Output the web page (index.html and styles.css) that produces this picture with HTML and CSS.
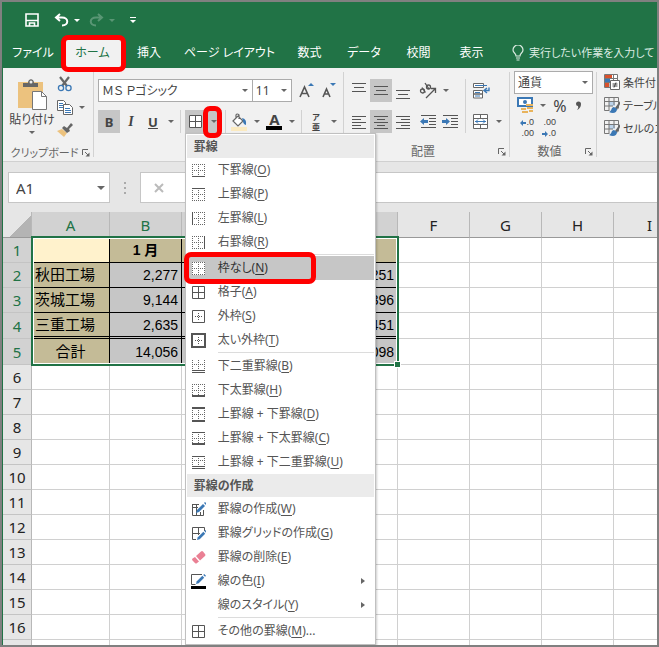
FILE: index.html
```html
<!DOCTYPE html>
<html lang="ja">
<head>
<meta charset="utf-8">
<title>Excel</title>
<link rel="stylesheet" href="styles.css">
</head>
<body>
<svg class="defs" aria-hidden="true">
  <symbol id="dots" viewBox="0 0 15 15"><path d="M1 1.5h13M1 7.5h13M1 13.5h13M1.5 1v13M7.5 1v13M13.5 1v13" fill="none" stroke="#666" stroke-dasharray="1 1"/></symbol>
  <symbol id="cross" viewBox="0 0 15 15"><path d="M4 7.5h8M7.5 4v8" fill="none" stroke="#555" stroke-dasharray="1 1"/></symbol>
  <symbol id="grid" viewBox="0 0 15 15"><path d="M1.5 1.5h12v12h-12zM1 7.5h13M7.5 1v13" fill="none" stroke="#555"/></symbol>
  <symbol id="pencil" viewBox="0 0 12 12"><path d="M1 11l1-3 6-6 2 2-6 6z" fill="#3b78b5"/><path d="M9 1l1-1 2 2-1 1z" fill="#3b78b5"/></symbol>
  <symbol id="launch" viewBox="0 0 8 8"><path d="M.5 6V.5H6M3 3l3.5 3.5" fill="none" stroke="#666"/><path d="M7.500 3.500v4h-4z" fill="#666"/></symbol>
  <symbol id="tablebrush" viewBox="0 0 17 17"><path d="M5 5h6v4H5z" fill="#bcd3ea"/><path d="M.5.500h14v11M.5.500v13h5M1 4.500h13M1 9h8M5 1v12M10 1v7" fill="none" stroke="#777"/><path d="M16 4l-5 7 2 2 3-6z" fill="#666"/><path d="M10 10c-3 0-2 4-5 5 4 2 8 1 8-3z" fill="#3b78b5"/></symbol>
</svg>
<div class="app">
  <header class="titlebar">
    <div class="quick">
      <button aria-label="上書き保存"><svg width="14" height="14" viewBox="0 0 14 14"><path d="M1 1h12v12H1zM1 7.500h12M4.500 13v-3h5v3" fill="none" stroke="#fff" stroke-width="1.600"/></svg></button>
      <button class="undo" aria-label="元に戻す"><svg width="15" height="14" viewBox="0 0 15 14"><path d="M6 1L2 4.500 6 8M2 4.500h6c7 0 7 8 0 8" fill="none" stroke="#fff" stroke-width="2"/></svg><i class="arrow"></i></button>
      <button class="undo off" aria-label="やり直し"><svg width="15" height="14" viewBox="0 0 15 14"><path d="M9 1l4 3.500L9 8M13 4.500H7c-7 0-7 8 0 8" fill="none" stroke="#fff" stroke-width="2"/></svg><i class="arrow"></i></button>
      <button class="custom" aria-label="カスタマイズ"><i class="arrow"></i></button>
    </div>
    <nav class="tabs">
      <a href="#">ファイル</a><a href="#" class="active"><span>ホーム</span></a><a href="#">挿入</a><a href="#">ページ レイアウト</a><a href="#">数式</a><a href="#">データ</a><a href="#">校閲</a><a href="#">表示</a>
      <a href="#" class="tell"><svg width="12" height="16" viewBox="0 0 12 16"><path d="M4 11C4 8 1 8 1 5a5 5 0 0 1 10 0c0 3-3 3-3 6zM4 13h4M4.500 15h3" fill="none" stroke="#dcebe2" stroke-width="1.200"/></svg>実行したい作業を入力して</a>
    </nav>
  </header>

  <section class="ribbon">
    <div class="group clip">
      <div class="clip-body">
        <button class="paste"><svg width="29" height="31" viewBox="0 0 29 31"><path d="M0 3h25v26H0z" fill="#ecc27e"/><path d="M5 8V4h5c0-5 6-5 6 0h4v4z" fill="#666"/><circle cx="13" cy="3" r="1.500" fill="#eee"/><path d="M14.500 12.500h9l5 5v13h-14z" fill="#fff" stroke="#777"/><path d="M23.500 12.500v5h5" fill="none" stroke="#777"/></svg><span>貼り付け</span><i class="arrow"></i></button>
        <div class="clip-side">
          <button aria-label="切り取り"><svg width="16" height="16" viewBox="0 0 16 16"><path d="M3 1l7 9M12 1L5 10" stroke="#666" stroke-width="2.200"/><circle cx="4" cy="12" r="2.600" fill="none" stroke="#3b78b5" stroke-width="1.300"/><circle cx="11.500" cy="12" r="2.600" fill="none" stroke="#3b78b5" stroke-width="1.300"/></svg></button>
          <button aria-label="コピー"><svg width="16" height="15" viewBox="0 0 16 15"><path d="M.5.500h6l2 2v8h-8z" fill="#fff" stroke="#666"/><path d="M2 3.500h4M2 5.500h4M2 7.500h4" stroke="#3b78b5"/><path d="M6.500 4.500h6l3 3v7h-9z" fill="#fff" stroke="#666"/><path d="M8 8.500h5M8 10.500h6M8 12.500h6" stroke="#3b78b5"/></svg><i class="arrow"></i></button>
          <button aria-label="書式のコピー"><svg width="16" height="14" viewBox="0 0 16 14"><path d="M0 8l5-2 5 4-3 4z" fill="#ecc27e"/><path d="M5 5l2-2 3 2 4-5 2 2-4 4 1 2-3 2z" fill="#666"/></svg></button>
        </div>
      </div>
      <footer><span>クリップボード</span><svg class="launch" width="8" height="8"><use href="#launch"/></svg></footer>
    </div>

    <div class="group font">
      <div class="row">
        <label class="combo face"><select aria-label="フォント"><option>ＭＳ Ｐゴシック</option></select></label>
        <label class="combo size"><select aria-label="フォント サイズ"><option>11</option></select></label>
        <button class="tool grow" aria-label="拡大"><svg width="16" height="18" viewBox="0 0 16 18"><path d="M1 15L5.500 5 10 15M2.500 11.500h6" fill="none" stroke="#555" stroke-width="1.600"/><path d="M9 4l3-3 3 3z" fill="#3b78b5"/></svg></button>
        <button class="tool" aria-label="縮小"><svg width="16" height="18" viewBox="0 0 16 18"><path d="M2 15l3.500-8L9 15M3.500 12h4" fill="none" stroke="#555" stroke-width="1.600"/><path d="M9 1h6l-3 3z" fill="#3b78b5"/></svg></button>
      </div>
      <div class="row">
        <button class="tool on bold">B</button><button class="tool italic">I</button><button class="tool under">U</button><button class="drop" aria-label="下線の種類"><i class="arrow"></i></button>
        <i class="bar"></i>
        <div class="borders">
          <button class="tool on" aria-label="罫線"><svg width="15" height="15" viewBox="0 0 15 15"><path d="M1 1h13v13H1z" fill="#fff"/><use href="#grid"/></svg></button><button class="drop on marked" aria-label="罫線メニュー"><i class="arrow"></i></button>
          <div class="menu" role="menu">
            <h2>罫線</h2>
            <button role="menuitem"><svg viewBox="0 0 15 15"><use href="#dots"/><path d="M1 13.500h13"/></svg><span>下罫線(<u>O</u>)</span></button>
            <button role="menuitem"><svg viewBox="0 0 15 15"><use href="#dots"/><path d="M1 1.500h13"/></svg><span>上罫線(<u>P</u>)</span></button>
            <button role="menuitem"><svg viewBox="0 0 15 15"><use href="#dots"/><path d="M1.500 1v13"/></svg><span>左罫線(<u>L</u>)</span></button>
            <button role="menuitem"><svg viewBox="0 0 15 15"><use href="#dots"/><path d="M13.500 1v13"/></svg><span>右罫線(<u>R</u>)</span></button>
            <hr>
            <button role="menuitem" class="current"><svg viewBox="0 0 15 15"><path class="paper" d="M1 1h13v13H1z"/><use href="#dots"/></svg><span>枠なし(<u>N</u>)</span></button>
            <button role="menuitem"><svg viewBox="0 0 15 15"><use href="#grid"/></svg><span>格子(<u>A</u>)</span></button>
            <button role="menuitem"><svg viewBox="0 0 15 15"><path d="M1.500 1.500h12v12h-12z"/><use href="#cross"/></svg><span>外枠(<u>S</u>)</span></button>
            <button role="menuitem"><svg viewBox="0 0 15 15"><path class="heavy" d="M1 1h13v13H1z"/><use href="#cross"/></svg><span>太い外枠(<u>T</u>)</span></button>
            <hr>
            <button role="menuitem"><svg viewBox="0 0 15 15"><use href="#dots" y="-2"/><path d="M1 11.500h13M1 13.500h13"/></svg><span>下二重罫線(<u>B</u>)</span></button>
            <button role="menuitem"><svg viewBox="0 0 15 15"><use href="#dots"/><path class="heavy" d="M1 13h13"/></svg><span>下太罫線(<u>H</u>)</span></button>
            <button role="menuitem"><svg viewBox="0 0 15 15"><use href="#dots"/><path class="heavy" d="M1 1h13M1 14h13"/></svg><span>上罫線 + 下罫線(<u>D</u>)</span></button>
            <button role="menuitem"><svg viewBox="0 0 15 15"><use href="#dots"/><path d="M1 1.500h13"/><path class="heavy" d="M1 13h13"/></svg><span>上罫線 + 下太罫線(<u>C</u>)</span></button>
            <button role="menuitem"><svg viewBox="0 0 15 15"><use href="#dots" y="-2"/><path d="M1 1.500h13M1 11.500h13M1 13.500h13"/></svg><span>上罫線 + 下二重罫線(<u>U</u>)</span></button>
            <h2>罫線の作成</h2>
            <button role="menuitem"><svg viewBox="0 0 15 15"><path d="M8 2.500H1.500v11h11V8M1 5.500h6M5.500 3v11M9.500 10v4M1 2.500h7"/><use href="#pencil" x="4" y="0" width="12" height="12"/></svg><span>罫線の作成(<u>W</u>)</span></button>
            <button role="menuitem"><svg viewBox="0 0 15 15"><path d="M5 13.500H1.500v-12h12V5M1 7.500h8M7.500 1v8"/><use href="#pencil" x="5" y="4" width="11" height="11"/></svg><span>罫線グリッドの作成(<u>G</u>)</span></button>
            <button role="menuitem"><svg viewBox="0 0 15 15"><path class="eraser" d="M5 6l5-4.500q1-1 2 0L14 4q1 1 0 2L9 10.500zM4 7l4 4.500-2 1.500q-1 1-2 0L1.500 10.500q-1-1 0-2z"/></svg><span>罫線の削除(<u>E</u>)</span></button>
            <button role="menuitem"><svg viewBox="0 0 15 15"><path d="M11 .500H.500v10h4"/><use href="#pencil" x="4" y="0" width="11" height="11"/><path class="ink" d="M0 12h15v3H0z"/></svg><span>線の色(<u>I</u>)</span><i class="more"></i></button>
            <button role="menuitem"><svg viewBox="0 0 15 15"></svg><span>線のスタイル(<u>Y</u>)</span><i class="more"></i></button>
            <hr>
            <button role="menuitem"><svg viewBox="0 0 15 15"><use href="#grid"/></svg><span>その他の罫線(<u>M</u>)...</span></button>
          </div>
        </div>
        <i class="bar tight"></i>
        <button class="tool" aria-label="塗りつぶし"><svg width="18" height="18" viewBox="0 0 18 18"><path d="M3 8l5-5 5 5-5 5zM6 5V2q1-2 3 0v4" fill="#fff" stroke="#666" stroke-width="1.200"/><path d="M12 5q5 1 4 7-3-1-3-4z" fill="#3b78b5"/><path d="M1 14h16v4H1z" fill="#fbeac0"/></svg></button><button class="drop" aria-label="塗りつぶしの色"><i class="arrow"></i></button>
        <button class="tool ink-tool" aria-label="フォントの色"><b>A</b></button><button class="drop" aria-label="文字の色"><i class="arrow"></i></button>
        <i class="bar tight"></i>
        <button class="tool ruby"><small>ア</small><small>亜</small></button><button class="drop" aria-label="ふりがな"><i class="arrow"></i></button>
      </div>
      <footer></footer>
    </div>

    <div class="group align">
      <div class="align-body">
        <div>
          <div class="row">
            <button class="tool" aria-label="上揃え"><svg width="14" height="16"><path d="M0 1.500h14M2 5.500h10M0 9.500h14" stroke="#555" transform="translate(0 -1)"/></svg></button>
            <button class="tool on" aria-label="上下中央"><svg width="14" height="16"><path d="M0 4.500h14M2 8.500h10M0 12.500h14" stroke="#555" transform="translate(0 -1)"/></svg></button>
            <button class="tool" aria-label="下揃え"><svg width="14" height="16"><path d="M0 7.500h14M2 11.500h10M0 15.500h14" stroke="#555"/></svg></button>
            <button class="tool wide" aria-label="方向"><svg width="18" height="17" viewBox="0 0 18 17"><g fill="none" stroke="#555" stroke-width="1.300"><circle cx="3.500" cy="9" r="2"/><path d="M3 5.500l3.500 5M6 1l4 6"/><circle cx="9.500" cy="5" r="2"/><path d="M7 16l9-9M12 6.500h4.500V11"/></g></svg></button><button class="drop" aria-label="方向の種類"><i class="arrow"></i></button>
          </div>
          <div class="row">
            <button class="tool" aria-label="左揃え"><svg width="14" height="14"><path d="M0 1.500h14M0 4.500h9M0 7.500h14M0 10.500h9M0 13.500h14" stroke="#555"/></svg></button>
            <button class="tool on" aria-label="中央揃え"><svg width="14" height="14"><path d="M0 1.500h14M3 4.500h8M0 7.500h14M3 10.500h8M0 13.500h14" stroke="#555"/></svg></button>
            <button class="tool" aria-label="右揃え"><svg width="14" height="14"><path d="M0 1.500h14M5 4.500h9M0 7.500h14M5 10.500h9M0 13.500h14" stroke="#555"/></svg></button>
            <button class="tool wide" aria-label="インデントを減らす"><svg width="17" height="14"><path d="M1 .500h15M9 3.500h7M9 6.500h7M9 9.500h7M1 12.500h15" stroke="#555"/><path d="M0 6.500L4 3v2h4v3H4v2z" fill="#3b78b5"/></svg></button><button class="tool" aria-label="インデントを増やす"><svg width="17" height="14"><path d="M1 .500h15M9 3.500h7M9 6.500h7M9 9.500h7M1 12.500h15" stroke="#555"/><path d="M8 6.500L4 3v2H0v3h4v2z" fill="#3b78b5"/></svg></button>
          </div>
        </div>
        <div class="merge">
          <button class="tool" aria-label="折り返し"><svg width="17" height="16" viewBox="0 0 17 16"><path d="M.5.500h10v4H.500zM.5 7.500h9v3.500h-9zM.5 11h9v4h-9z" fill="#fff" stroke="#666"/><path d="M2 2.500h12M2 9.500h5M2 13h5" stroke="#3b78b5"/><path d="M16 4.500v3h-4M14 5l-3 2.500 3 2.500" fill="none" stroke="#3b78b5" stroke-width="1.400"/></svg></button>
          <div class="row"><button class="tool" aria-label="セルを結合"><svg width="16" height="15"><path d="M.5.500h14v14H.500zM1 4.500h14M1 10.500h14M7.500 1v3M7.500 11v3" fill="#fff" stroke="#666"/><path d="M2 7.500h11M5 5.500l-2 2 2 2M10 5.500l2 2-2 2" fill="none" stroke="#3b78b5"/></svg></button><button class="drop" aria-label="結合の種類"><i class="arrow"></i></button></div>
        </div>
      </div>
      <footer><span>配置</span><svg class="launch" width="8" height="8"><use href="#launch"/></svg></footer>
    </div>

    <div class="group number">
      <label class="combo"><select aria-label="表示形式"><option>通貨</option></select></label>
      <div class="row">
        <button class="tool" aria-label="通貨表示形式"><svg width="17" height="17" viewBox="0 0 17 17"><path d="M1 1h14v8H1z" fill="#fff" stroke="#3b78b5" stroke-width="2"/><circle cx="8" cy="5" r="2" fill="#3b78b5"/><path d="M9 7h7v2H9zM10 10h6v2h-6zM4 11h5v2H4zM5 14h6v2H5zM12 13h4v2h-4z" fill="#e8b35c"/></svg></button><button class="drop" aria-label="通貨の種類"><i class="arrow"></i></button><button class="tool percent">%</button><button class="tool comma" aria-label="桁区切り"><svg width="7" height="9"><path d="M1 3a2.500 2.500 0 1 1 5 0Q6 7 2 9q2-2 1-4Q1 5 1 3z" fill="#555"/></svg></button>
      </div>
      <div class="row decimals">
        <button><span><svg width="6" height="6"><path d="M0 3l3-3v2h3v2H3v2z" fill="#3b78b5"/></svg>.0</span><span>.00</span></button>
        <button><span>.00</span><span><svg width="6" height="6"><path d="M6 3L3 0v2H0v2h3v2z" fill="#3b78b5"/></svg>.0</span></button>
      </div>
      <footer><span>数値</span><svg class="launch" width="8" height="8"><use href="#launch"/></svg></footer>
    </div>

    <div class="group styles">
      <button><svg width="17" height="17" viewBox="0 0 17 17"><path d="M.5.500h13v13H.500zM1 4.500h13M1 8.500h13M5 1v12M9.500 1v12" fill="#fff" stroke="#777"/><path d="M1 1h7v3H1z" fill="#d9512c"/><path d="M1 5h5v3H1z" fill="#3b78b5"/><path d="M1 9h4v4H1z" fill="#d9512c"/><path d="M6.500 6.500h9v9h-9z" fill="#fff" stroke="#666"/><path d="M8.500 10h5M8.500 12h5M12 8.500l-2 5" stroke="#444"/></svg>条件付</button>
      <button><svg width="17" height="17"><use href="#tablebrush"/></svg>テーブル</button>
      <button><svg width="17" height="17"><use href="#tablebrush"/></svg>セルのス</button>
    </div>
  </section>

  <div class="formula">
    <label class="combo name"><input value="A1" aria-label="名前ボックス"></label>
    <i class="grip"></i>
    <label class="fx"><svg width="12" height="12"><path d="M2 2l8 8M10 2l-8 8" stroke="#bbb" stroke-width="2"/></svg><input aria-label="数式バー"></label>
  </div>

  <main class="sheet">
    <table>
      <colgroup><col class="c-head"><col class="c-a"><col span="8" class="c-std"></colgroup>
      <thead><tr><th class="corner"></th><th class="sel">A</th><th class="sel">B</th><th class="sel"></th><th class="sel"></th><th class="sel"></th><th>F</th><th>G</th><th>H</th><th>I</th></tr></thead>
      <tbody>
        <tr class="data top"><th>1</th><td class="blank"></td><td>1 月</td><td></td><td></td><td>合計</td><td></td><td></td><td></td><td></td></tr>
        <tr class="data"><th>2</th><td>秋田工場</td><td>2,277</td><td></td><td></td><td>251</td><td></td><td></td><td></td><td></td></tr>
        <tr class="data"><th>3</th><td>茨城工場</td><td>9,144</td><td></td><td></td><td>396</td><td></td><td></td><td></td><td></td></tr>
        <tr class="data double"><th>4</th><td>三重工場</td><td>2,635</td><td></td><td></td><td>451</td><td></td><td></td><td></td><td></td></tr>
        <tr class="data total"><th>5</th><td>合計</td><td>14,056</td><td></td><td></td><td>098</td><td></td><td></td><td></td><td></td></tr>
        <tr><th>6</th><td></td><td></td><td></td><td></td><td></td><td></td><td></td><td></td><td></td></tr>
        <tr><th>7</th><td></td><td></td><td></td><td></td><td></td><td></td><td></td><td></td><td></td></tr>
        <tr><th>8</th><td></td><td></td><td></td><td></td><td></td><td></td><td></td><td></td><td></td></tr>
        <tr><th>9</th><td></td><td></td><td></td><td></td><td></td><td></td><td></td><td></td><td></td></tr>
        <tr><th>10</th><td></td><td></td><td></td><td></td><td></td><td></td><td></td><td></td><td></td></tr>
        <tr><th>11</th><td></td><td></td><td></td><td></td><td></td><td></td><td></td><td></td><td></td></tr>
        <tr><th>12</th><td></td><td></td><td></td><td></td><td></td><td></td><td></td><td></td><td></td></tr>
        <tr><th>13</th><td></td><td></td><td></td><td></td><td></td><td></td><td></td><td></td><td></td></tr>
        <tr><th>14</th><td></td><td></td><td></td><td></td><td></td><td></td><td></td><td></td><td></td></tr>
        <tr><th>15</th><td></td><td></td><td></td><td></td><td></td><td></td><td></td><td></td><td></td></tr>
        <tr><th>16</th><td></td><td></td><td></td><td></td><td></td><td></td><td></td><td></td><td></td></tr>
        <tr><th></th><td></td><td></td><td></td><td></td><td></td><td></td><td></td><td></td><td></td></tr>
      </tbody>
    </table>
    <div class="selection"></div>
  </main>
</div>
</body>
</html>
```

FILE: styles.css
```css
*, *::before, *::after { box-sizing: border-box; }
body {
  margin: 0;
  height: 100vh;
  overflow: hidden;
  background: #808080;
  color: #444;
  font: 12px/16px "Noto Sans", "Noto Sans CJK JP", sans-serif;
  font-feature-settings: "palt";
}
button, input, select {
  font: inherit;
  font-feature-settings: inherit;
  color: inherit;
  margin: 0;
  padding: 0;
  border: 0;
  background: none;
  appearance: none;
  outline: 0;
}
button {
  display: flex;
  align-items: center;
  justify-content: center;
  white-space: nowrap;
}
svg { display: block; flex: none; }
.defs { position: absolute; width: 0; height: 0; }
.app {
  display: flex;
  flex-direction: column;
  height: 100%;
  border: 2px solid #808080;
  background: #217346;
  padding-left: 1px;
  overflow: hidden;
}
.arrow {
  border: 3px solid transparent;
  border-top-color: #666;
  border-bottom: 0;
}

/* title bar and tabs */
.titlebar { color: #fff; flex: none; }
.quick {
  display: flex;
  align-items: center;
  height: 36px;
  padding-left: 22px;
  gap: 15px;
}
.quick .arrow { border-top-color: #fff; }
.undo { gap: 5px; }
.undo.off { margin-left: -6px; }
.off { opacity: 0.25; }
.custom {
  flex-direction: column;
  gap: 2px;
}
.custom::before { content: ""; width: 6px; height: 1px; background: #fff; }
.tabs {
  display: grid;
  grid-template-columns: 60px 59px 54px 107px 53px 56px 53px 53px 1fr;
  height: 30px;
}
.tabs a {
  display: flex;
  align-items: center;
  justify-content: center;
  color: #fff;
  text-decoration: none;
  white-space: nowrap;
}
.tabs .active { position: relative; background: #f1f1f1; color: #217346; }
.tabs .active::after {
  content: "";
  position: absolute;
  z-index: 5;
  inset: -3px -4px -4px -2px;
  border: 5px solid #f00;
  border-radius: 7px;
}
.tabs .tell {
  justify-content: flex-start;
  gap: 5px;
  padding-left: 14px;
  color: #dcebe2;
  font-size: 11px;
}

/* ribbon */
.ribbon {
  display: flex;
  flex: none;
  height: 94px;
  background: #f1f1f1;
  border-bottom: 1px solid #d0d0d0;
}
.group {
  position: relative;
  flex: none;
  display: flex;
  flex-direction: column;
  gap: 8px;
  padding: 11px 4px 0;
}
.group::after {
  content: "";
  position: absolute;
  right: 0;
  top: 4px;
  bottom: 4px;
  width: 1px;
  background: #d2d2d2;
}
.group footer {
  display: flex;
  align-items: center;
  justify-content: center;
  height: 18px;
  margin-top: auto;
  color: #666;
}
footer span { margin: 0 auto; }
.row { display: flex; align-items: center; }
.tool { width: 22px; height: 23px; flex: none; }
.drop { width: 13px; height: 23px; flex: none; }
.on { background: #c6c6c6; }
.bar { width: 1px; height: 23px; margin: 0 4px 0 3px; background: #d2d2d2; }
.bar.tight { margin: 0 3px; }
.combo {
  position: relative;
  display: flex;
  height: 23px;
  border: 1px solid #ababab;
  background: #fff;
}
.combo select, .combo input { width: 100%; min-width: 0; padding-left: 3px; }
.combo::after {
  content: "";
  position: absolute;
  right: 4px;
  top: 9px;
  border: 3px solid transparent;
  border-top-color: #666;
  border-bottom: 0;
}

.clip { width: 91px; padding-top: 8px; }
.clip-body { display: flex; }
.clip footer { font-size: 11px; }
.paste { flex-direction: column; width: 50px; gap: 2px; }
.paste .arrow { margin-top: 1px; }
.clip-side {
  display: flex;
  flex-direction: column;
  gap: 8px;
}
.clip-side button { justify-content: flex-start; gap: 6px; }

.font { width: 250px; }
.face { width: 158px; }
.size { width: 41px; margin-left: -1px; }
.grow { margin-left: 4px; }
.bold { font-weight: bold; font-size: 13px; }
.italic { font: italic bold 14px "Liberation Serif", serif; }
.under { font-weight: bold; font-size: 13px; text-decoration: underline; }
.borders { position: relative; display: flex; }
.borders > .drop { width: 15px; }
.marked::after {
  content: "";
  position: absolute;
  z-index: 12;
  left: 18px;
  top: -4px;
  width: 19px;
  height: 32px;
  border: 5px solid #f00;
  border-radius: 7px;
}
.ink-tool b {
  width: 16px;
  height: 17px;
  font: bold 15px/13px "Noto Sans", sans-serif;
  border-bottom: 4px solid #000;
}
.ruby { flex-direction: column; }
.ruby small { font: bold 8px/10px "Noto Sans CJK JP", sans-serif; }

.align { width: 166px; }
.align-body { display: flex; }
.align-body > div { display: flex; flex-direction: column; gap: 8px; }
.wide { margin-left: 3px; }
.merge { border-left: 1px solid #d2d2d2; margin-left: 4px; padding-left: 4px; }

.number { width: 87px; padding-top: 3px; gap: 0; }
.number .percent { font-size: 16px; }
.number .comma { width: 14px; }
.decimals { height: 22px; gap: 4px; padding-left: 2px; }
.decimals button {
  flex-direction: column;
  align-items: flex-end;
  width: 18px;
  font: 9px/11px "Liberation Sans", sans-serif;
}
.decimals span { display: flex; align-items: center; }

.styles { flex: 1; min-width: 0; gap: 0; padding: 3px 0 0 7px; overflow: hidden; font-size: 11px; }
.styles::after { display: none; }
.styles button { height: 23px; gap: 2px; justify-content: flex-start; }

/* borders menu */
.menu {
  position: absolute;
  z-index: 10;
  left: 0;
  top: 100%;
  width: 191px;
  padding: 1px;
  background: #fff;
  border: 1px solid #c0c0c0;
  box-shadow: 1px 1px 2px rgba(0, 0, 0, 0.2);
}
.menu h2 {
  margin: 0;
  padding-left: 7px;
  background: #ebebeb;
  color: #555;
  font-size: 12px;
  line-height: 23px;
}
.menu button {
  position: relative;
  width: 100%;
  height: 24px;
  padding: 0 9px 0 4px;
  justify-content: flex-start;
  gap: 12px;
  color: #555;
}
.menu button > svg { width: 15px; height: 15px; fill: none; stroke: #555; }
.menu .heavy { stroke-width: 2px; }
.menu .eraser { fill: #ea8094; stroke: none; }
.menu .ink { fill: #000; stroke: none; }
.menu .paper { fill: #fff; stroke: none; }
.menu use { stroke: none; }
.menu u { text-underline-offset: 2px; }
.menu hr { height: 1px; margin: 0 0 1px 31px; border: 0; background: #dcdcdc; }
.menu .current { background: #c6c6c6; color: #333; }
.menu .current::after {
  content: "";
  position: absolute;
  inset: -4px 58px -4px -3px;
  border: 5px solid #f00;
  border-radius: 7px;
}
.more {
  margin-left: auto;
  border: 3px solid transparent;
  border-left: 4px solid #666;
  border-right: 0;
}

/* formula bar */
.formula {
  display: flex;
  flex: none;
  align-items: stretch;
  height: 50px;
  padding: 10px 0 9px 5px;
  background: #e6e6e6;
}
.formula .combo { width: 102px; height: 31px; border-color: #c6c6c6; font-size: 15px; }
.formula .combo input { padding-left: 7px; }
.formula .combo::after { top: 13px; border-width: 4px 4px 0; }
.grip {
  align-self: center;
  width: 2px;
  height: 12px;
  margin: 0 14px;
  background: repeating-linear-gradient(#aaa 0 2px, transparent 2px 5px);
}
.fx {
  flex: 1;
  display: flex;
  align-items: center;
  padding-left: 12px;
  background: #fff;
  border: 1px solid #c6c6c6;
  border-right: 0;
}
.fx input { flex: 1; min-width: 0; }

/* worksheet */
.sheet { position: relative; flex: 1; min-height: 0; overflow: hidden; background: #fff; }
table { width: 683px; table-layout: fixed; border-collapse: separate; border-spacing: 0; }
.c-head { width: 29px; }
.c-a { width: 78px; }
.c-std { width: 72px; }
th {
  padding: 0;
  background: #e6e6e6;
  border-right: 1px solid #b8b8b8;
  border-bottom: 1px solid #c4c4c4;
  font-size: 15px;
  font-weight: normal;
  line-height: 20px;
  color: #222;
}
thead th { height: 26px; border-bottom-color: #999; }
tbody th { height: 25px; }
thead .sel, .data th { background: #d2d2d2; color: #217346; }
.corner { background: linear-gradient(135deg, #e6e6e6 60%, #b4b4b4 60%); }
td {
  padding: 0 3px;
  border-right: 1px solid #d0d0d0;
  border-bottom: 1px solid #d0d0d0;
  font: 14px/18px "Liberation Sans", "Noto Sans CJK JP", sans-serif;
  color: #000;
  white-space: nowrap;
  overflow: hidden;
}
.data td:nth-child(-n+6) {
  background: #c6c6c6;
  border-right-color: #000;
  border-bottom-color: #000;
  text-align: right;
}
.data td:nth-child(2) { background: #c4bb97; text-align: left; font-size: 15px; }
.top td:nth-child(-n+6) { background: #c4bb97; text-align: center; font-weight: bold; }
.top td.blank { background: #fff2cc; }
.double th, .total th { height: 26px; }
.double td:nth-child(-n+6) { border-bottom: 3px double #000; }
.total td:nth-child(2) { text-align: center; }
.selection {
  position: absolute;
  left: 28px;
  top: 24px;
  width: 368px;
  height: 130px;
  border: 2px solid #217346;
  box-shadow: inset 0 0 0 1px #fff;
}
.selection::after {
  content: "";
  position: absolute;
  right: -4px;
  bottom: -4px;
  width: 7px;
  height: 7px;
  background: #217346;
  border: 1px solid #fff;
}
```
